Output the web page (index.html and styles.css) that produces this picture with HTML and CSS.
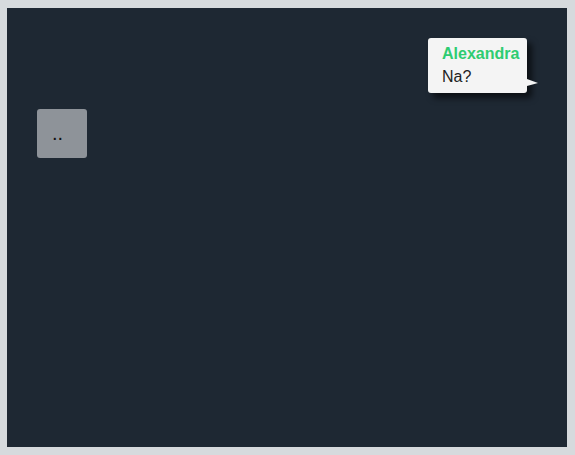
FILE: index.html
```html
<!DOCTYPE html>
<html>
<head>
<meta charset="utf-8">
<link rel="stylesheet" href="styles.css">
</head>
<body>
<div class="stage">
  <div class="bubble">
    <div class="name">Alexandra</div>
    <div class="msg">Na?</div>
  </div>
  <div class="tile">..</div>
</div>
</body>
</html>
```
FILE: styles.css
```css
html, body {
  margin: 0;
  padding: 0;
  background: #d6dadd;
}
body {
  padding: 8px 8px 8px 7px;
  font-family: "Liberation Sans", Arial, sans-serif;
}
.stage {
  position: relative;
  width: 560px;
  height: 439px;
  background: #1e2833;
}
.bubble {
  position: absolute;
  left: 421px;
  top: 30px;
  width: 78px;
  height: 41px;
  padding: 7px 7px 7px 14px;
  background: #f4f4f4;
  border-radius: 3px;
  box-shadow: 5px 5px 6px rgba(0,0,0,0.6);
  font-size: 16px;
  color: #222;
  line-height: 18px;
}
.bubble::after {
  content: "";
  position: absolute;
  right: -11px;
  top: 41px;
  width: 0;
  height: 0;
  border-left: 11px solid #f4f4f4;
  border-top: 4px solid transparent;
  border-bottom: 3px solid transparent;
}
.name {
  color: #2ecc71;
  font-weight: bold;
  font-size: 16px;
}
.msg {
  margin-top: 5px;
}
.tile {
  position: absolute;
  left: 30px;
  top: 101px;
  width: 35px;
  height: 49px;
  padding-left: 15px;
  background: #8e9399;
  border-radius: 3px;
  color: #111;
  font-size: 20px;
  line-height: 49px;
}
```
